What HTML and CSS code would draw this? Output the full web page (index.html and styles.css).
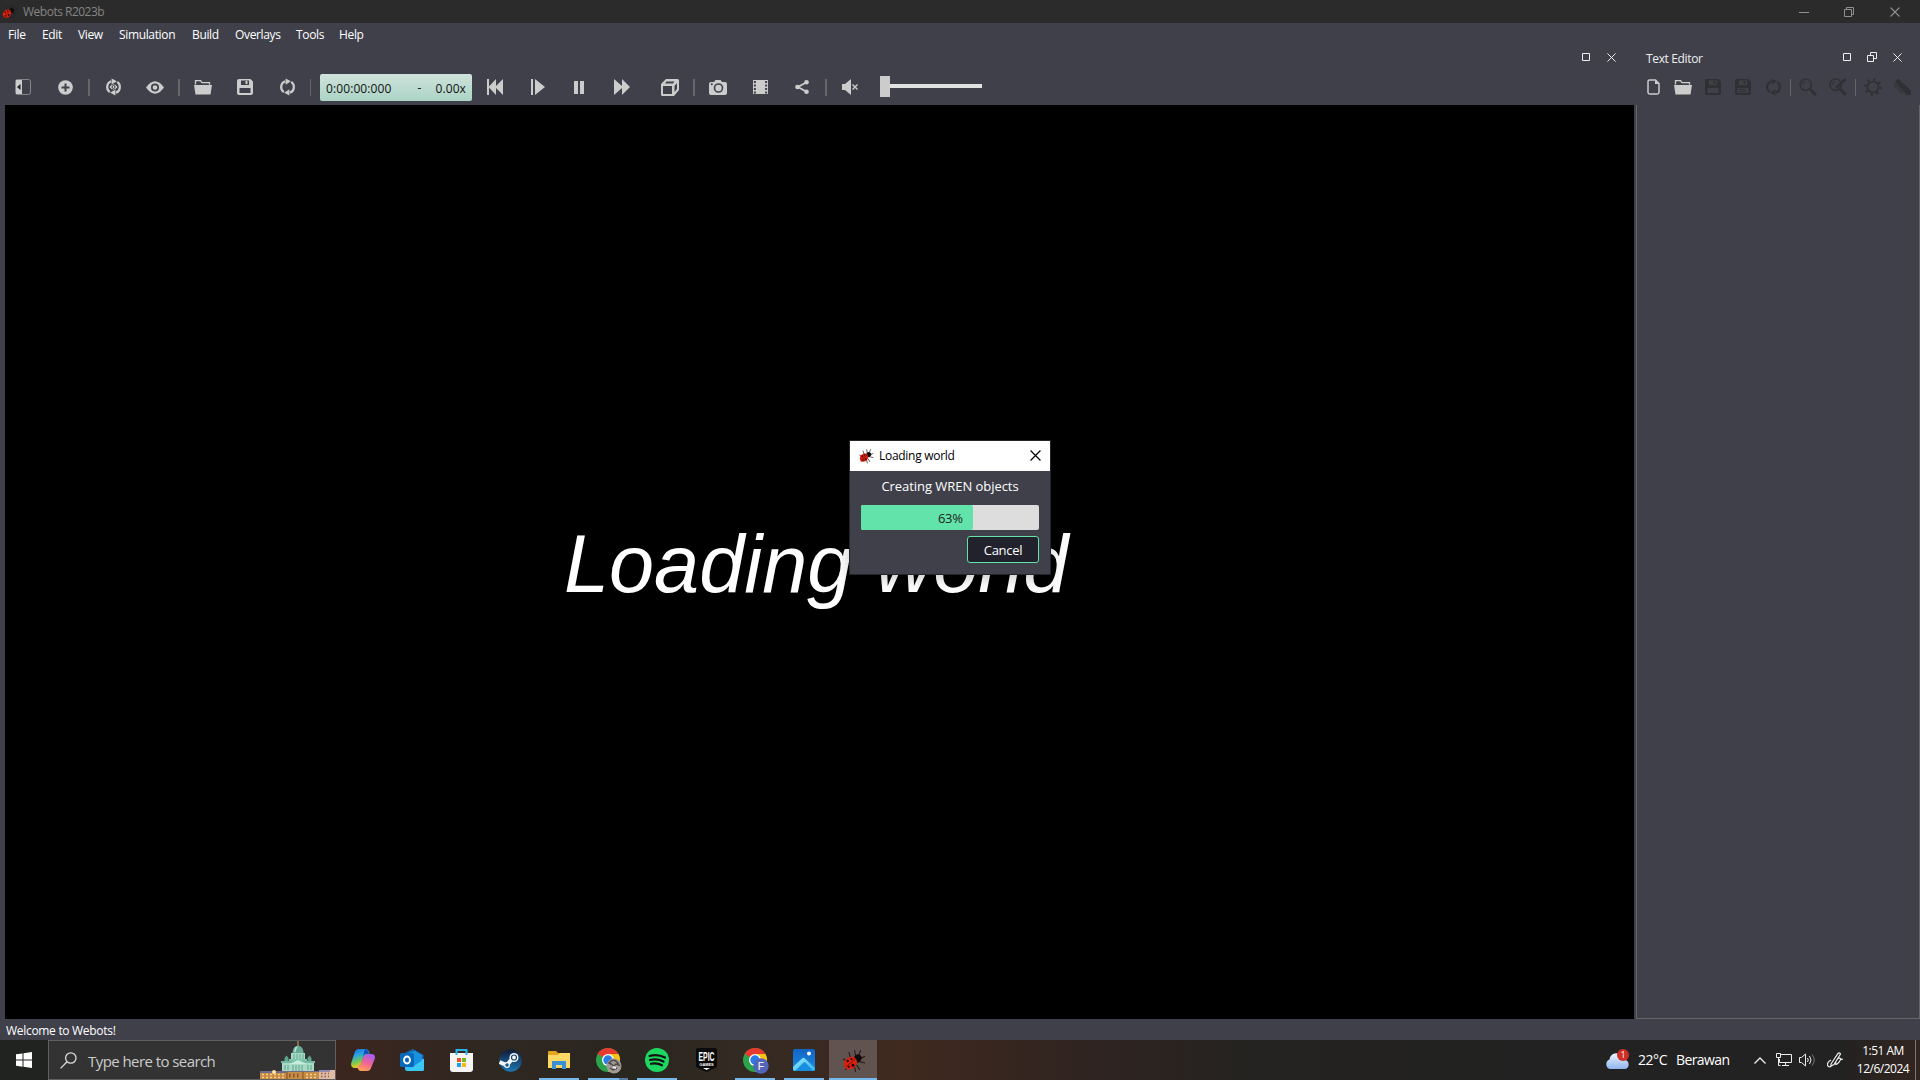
FILE: index.html
```html
<!DOCTYPE html>
<html lang="en">
<head>
<meta charset="utf-8">
<title>Webots R2023b</title>
<link rel="stylesheet" href="styles.css">
</head>
<body>
<svg class="defs" aria-hidden="true">
  <defs>
    <symbol id="bug" viewBox="0 0 24 24">
      <path d="M9 9 7.500 4M7 13 2 10.500M8 17 4 21M13 18l1 5M14 8l-1-6M17 7l2-5M19 10l4-2M17 13l6 1.500M15 16l3 5" fill="none" stroke="#241816" stroke-width="1"/>
      <ellipse cx="16" cy="10" rx="3.600" ry="4" transform="rotate(42 16 10)" fill="#100c0c"/>
      <ellipse cx="9" cy="14.500" rx="6.800" ry="5.700" transform="rotate(-38 9 14.500)" fill="#d8210e"/>
      <path d="M5 18 14 10" stroke="#5a0904" stroke-width=".7"/>
      <circle cx="6.500" cy="12.500" r="1.200" fill="#200"/><circle cx="11.500" cy="16.500" r="1.400" fill="#200"/><circle cx="10" cy="10.500" r="1" fill="#200"/><circle cx="7.400" cy="18" r="1" fill="#200"/>
    </symbol>
    <symbol id="reload" viewBox="0 0 18 18">
      <path d="M6.500 2.800A6.600 6.600 0 0 0 5 14.300M11.500 15.200A6.600 6.600 0 0 0 13 3.700" fill="none" stroke="currentColor" stroke-width="2.300"/>
      <path d="M7 0l5.500 3L7 6.500zM11 11.500v6.500l-5.500-3z" fill="currentColor"/>
    </symbol>
    <symbol id="folder" viewBox="0 0 18 16">
      <path d="M1.500 5.500V1.700h5l1.500 2h7.500v2" fill="none" stroke="currentColor" stroke-width="1.300"/>
      <path d="M0 6h18l-1.500 9.500h-15z" fill="currentColor"/>
    </symbol>
    <symbol id="save" viewBox="0 0 16 16">
      <path fill-rule="evenodd" d="M2 0h11.500L16 2.500V14a2 2 0 0 1-2 2H2a2 2 0 0 1-2-2V2a2 2 0 0 1 2-2zM4 1.500v4.500h8V1.500zM2.500 9v5h11V9z" fill="currentColor"/><path d="M8.500 2h2v3h-2z" fill="currentColor"/>
    </symbol>
    <symbol id="close" viewBox="0 0 10 10"><path d="M.5.5l9 9M9.500.5l-9 9" fill="none" stroke="currentColor" stroke-width="1.100"/></symbol>
    <symbol id="square" viewBox="0 0 8 8"><path d="M.5.5h7v7h-7z" fill="none" stroke="currentColor"/></symbol>
    <symbol id="restore" viewBox="0 0 10 10"><path d="M.5 2.500h7v7h-7zM2.500 2.500v-2h7v7h-2" fill="none" stroke="currentColor"/></symbol>
    <symbol id="float" viewBox="0 0 10 10"><path d="M.5 3.500h6v6h-6zM3.500 3.500v-3h6v6h-3" fill="none" stroke="currentColor"/></symbol>
    <symbol id="magnify" viewBox="0 0 18 18"><circle cx="6.700" cy="6.700" r="5.700" fill="none" stroke="currentColor" stroke-width="1.500"/><path d="M3.500 7a3.300 3.300 0 0 1 3.200-3.500" fill="none" stroke="currentColor"/><path d="M11 11l6 6" stroke="currentColor" stroke-width="3"/></symbol>
    <symbol id="chrome" viewBox="0 0 24 24">
      <circle cx="12" cy="12" r="12" fill="#2aa34b"/>
      <path d="M12 12 1.600 6A12 12 0 0 1 22.400 6z" fill="#e8392e"/>
      <path d="M12 6h10.400A12 12 0 0 1 12 24l5.200-9z" fill="#fbc116"/>
      <circle cx="12" cy="12" r="6" fill="#fff"/><circle cx="12" cy="12" r="4.700" fill="#2b7de9"/>
    </symbol>
    <linearGradient id="gCopA" x1="0" y1="0" x2=".3" y2="1"><stop offset="0" stop-color="#1668e0"/><stop offset=".4" stop-color="#2ba9de"/><stop offset=".7" stop-color="#76c653"/><stop offset="1" stop-color="#f5cd16"/></linearGradient>
    <linearGradient id="gCopB" x1=".7" y1="0" x2=".3" y2="1"><stop offset="0" stop-color="#a75df0"/><stop offset=".5" stop-color="#ee6299"/><stop offset="1" stop-color="#ffa254"/></linearGradient>
    <linearGradient id="gSteam" x1="0" y1="0" x2="0" y2="1"><stop offset="0" stop-color="#101b36"/><stop offset="1" stop-color="#1c78b5"/></linearGradient>
    <linearGradient id="gPhoto" x1="0" y1="0" x2="0" y2="1"><stop offset="0" stop-color="#1164c4"/><stop offset="1" stop-color="#1f8ce4"/></linearGradient>
    <linearGradient id="gHill" x1="0" y1="0" x2="1" y2="1"><stop offset="0" stop-color="#9aecff"/><stop offset="1" stop-color="#2ab2ef"/></linearGradient>
    <linearGradient id="gCloud" x1="0" y1="0" x2="0" y2="1"><stop offset="0" stop-color="#eef5ff"/><stop offset="1" stop-color="#8fb5ee"/></linearGradient>
  </defs>
</svg>

<div class="screen">
  <header class="titlebar">
    <svg class="app-icon"><use href="#bug"/></svg>
    <span class="app-title">Webots R2023b</span>
    <div class="window-buttons">
      <span class="win-btn"><svg width="10" height="10"><path d="M0 5.500h10" stroke="currentColor"/></svg></span>
      <span class="win-btn"><svg width="10" height="10"><use href="#restore"/></svg></span>
      <span class="win-btn"><svg width="10" height="10"><use href="#close"/></svg></span>
    </div>
  </header>

  <nav class="menubar">
    <span class="menu-file">File</span><span class="menu-edit">Edit</span><span class="menu-view">View</span><span class="menu-simulation">Simulation</span><span class="menu-build">Build</span><span class="menu-overlays">Overlays</span><span class="menu-tools">Tools</span><span class="menu-help">Help</span>
  </nav>

  <div class="workspace">
    <main class="view-dock">
      <div class="dock-title">
        <svg width="8" height="8"><use href="#square"/></svg>
        <svg width="9" height="9"><use href="#close"/></svg>
      </div>
      <div class="toolbar">
        <span class="tool"><svg width="16" height="16"><rect x=".5" y=".5" width="15" height="15" rx="2" fill="none" stroke="#85858a"/><path d="M1 1h6v14H1z" fill="#ccc"/><path d="M5.500 5v6L2 8z" fill="#222"/></svg></span>
        <span class="tool"><svg width="15" height="15"><circle cx="7.500" cy="7.500" r="7.300" fill="currentColor"/><path d="M7.500 3.500v8M3.500 7.500h8" stroke="#40404a" stroke-width="2"/></svg></span>
        <i class="sep"></i>
        <span class="tool"><svg width="17" height="18"><use href="#reload"/><path d="M4 9q4.500-6 9 0q-4.500 6-9 0z" fill="currentColor" stroke="#40404a" stroke-width=".8"/><circle cx="8.500" cy="9" r="1.500" fill="none" stroke="#40404a"/></svg></span>
        <span class="tool"><svg width="18" height="13" viewBox="0 0 18 13"><path d="M0 6.500Q9-6 18 6.500Q9 19 0 6.500z" fill="currentColor"/><circle cx="9" cy="6.500" r="3.200" fill="none" stroke="#40404a" stroke-width="1.700"/></svg></span>
        <i class="sep"></i>
        <span class="tool"><svg width="18" height="16"><use href="#folder"/></svg></span>
        <span class="tool"><svg width="16" height="16"><use href="#save"/></svg></span>
        <span class="tool"><svg width="17" height="18"><use href="#reload"/></svg></span>
        <i class="sep thin"></i>
        <div class="clock"><span class="clock-time">0:00:00:000</span><span class="clock-dash">-</span><span class="clock-speed">0.00x</span></div>
        <span class="tool"><svg width="16" height="16" fill="currentColor"><path d="M0 0h2v16H0zM9 0v16L1.500 8zM16 0v16L8 8z"/></svg></span>
        <span class="tool nudge"><svg width="14" height="16" fill="currentColor"><path d="M0 0h2v16H0zM4 0l10 8-10 8z"/></svg></span>
        <span class="tool"><svg width="10" height="13" fill="currentColor"><path d="M0 0h4v13H0zM6 0h4v13H6z"/></svg></span>
        <span class="tool nudge"><svg width="16" height="16" fill="currentColor"><path d="M0 0l8 7V0l8 8-8 8V9l-8 7z"/></svg></span>
        <span class="tool cube"><svg width="18" height="17" fill="currentColor" fill-rule="evenodd"><path d="M5 0h11.500a1.500 1.500 0 0 1 1.500 1.500V11l-5 6H1.500A1.500 1.500 0 0 1 0 15.500V5zM2 7v8h9V7zM5.500 2.500 4 4.500h8l1.500-2zM16 4l-2.500 3v6L16 10z"/></svg></span>
        <i class="sep"></i>
        <span class="tool"><svg width="18" height="15"><path d="M2 2h3l1.500-2h5L13 2h3a2 2 0 0 1 2 2v9a2 2 0 0 1-2 2H2a2 2 0 0 1-2-2V4a2 2 0 0 1 2-2z" fill="currentColor"/><circle cx="9.500" cy="8" r="4" fill="none" stroke="#40404a" stroke-width="1.600"/><circle cx="2.800" cy="4.200" r="1" fill="#40404a"/></svg></span>
        <span class="tool"><svg width="15" height="14"><path d="M0 0h15v14H0z" fill="currentColor"/><path d="M1.900 1v13M13.100 1v13" stroke="#40404a" stroke-width="2" stroke-dasharray="2 1.500"/></svg></span>
        <span class="tool"><svg width="14" height="14" fill="currentColor"><path d="M11.500 2.300 3 7l8.500 4.700" fill="none" stroke="currentColor" stroke-width="1.800"/><circle cx="2.500" cy="7" r="2.300"/><circle cx="11.500" cy="2.300" r="2.300"/><circle cx="11.500" cy="11.700" r="2.300"/></svg></span>
        <i class="sep"></i>
        <span class="tool"><svg width="16" height="16" fill="currentColor"><path d="M0 5h3l6-5v16l-6-5H0z"/><path d="M10.500 5.500l5 5M15.500 5.500l-5 5" stroke="currentColor" stroke-width="1.400"/></svg></span>
        <div class="slider"><b></b></div>
      </div>
      <section class="viewport"><h1 class="splash">Loading world</h1></section>
    </main>

    <aside class="editor-dock">
      <div class="dock-title">
        <span class="dock-name">Text Editor</span>
        <svg width="8" height="8"><use href="#square"/></svg>
        <svg width="10" height="10"><use href="#float"/></svg>
        <svg width="9" height="9"><use href="#close"/></svg>
      </div>
      <div class="toolbar">
        <span class="tool"><svg width="13" height="16"><path d="M2.500 1h6L12 4.500v9a1.700 1.700 0 0 1-1.700 1.500H2.500A1.600 1.600 0 0 1 1 13.500v-11A1.500 1.500 0 0 1 2.500 1z" fill="none" stroke="currentColor" stroke-width="1.500"/><path d="M8 1v4h4z" fill="currentColor"/></svg></span>
        <span class="tool"><svg width="18" height="16"><use href="#folder"/></svg></span>
        <span class="tool off"><svg width="16" height="16"><use href="#save"/></svg></span>
        <span class="tool off"><svg width="16" height="16"><use href="#save"/><path d="M4 10.500h7M4 12.500h8" stroke="currentColor"/></svg></span>
        <span class="tool off"><svg width="17" height="18"><use href="#reload"/></svg></span>
        <i class="sep thin"></i>
        <span class="tool off"><svg width="18" height="18"><use href="#magnify"/></svg></span>
        <span class="tool off"><svg width="18" height="18"><use href="#magnify"/><path d="M7 10l9.500-9" stroke="currentColor" stroke-width="2.500"/></svg></span>
        <i class="sep thin"></i>
        <span class="tool off"><svg width="18" height="18" fill="none" stroke="currentColor"><circle cx="9" cy="9" r="5.500" stroke-width="1.700"/><circle cx="9" cy="9" r="7.700" stroke-width="2.400" stroke-dasharray="2.200 3.850"/></svg></span>
        <span class="tool off"><svg width="18" height="18"><path d="M1 3.500 4 .5 17 12.500v4.500h-3.500z" fill="currentColor"/><path d="M1 5.500l13 12M0 7.500l9 8" fill="none" stroke="currentColor" stroke-dasharray="1 1" stroke-width="2"/></svg></span>
      </div>
      <div class="editor-pane"></div>
    </aside>
  </div>

  <footer class="statusbar">Welcome to Webots!</footer>

  <div class="taskbar">
    <div class="start"><svg width="16" height="16" fill="#fff"><path d="M0 2.300 6.500 1.400v6.200H0zM7.500 1.200 16 0v7.600H7.500zM0 8.500h6.500v6.200L0 13.800zM7.500 8.500H16V16l-8.500-1.200z"/></svg></div>
    <div class="search">
      <svg width="17" height="17" fill="none" stroke="#ddd" stroke-width="1.300"><circle cx="10.800" cy="6" r="5.200"/><path d="M7 9.800.6 16.400"/></svg>
      <span class="search-text">Type here to search</span>
      <svg class="landmark" width="75" height="38" viewBox="0 0 75 38">
        <path d="M32.500 12q0-5 3-6.500l2.500-1 2.500 1q3 1.500 3 6.500z" fill="#69ab96"/><path d="M35 11q0-4 2-5" fill="none" stroke="#b5e4d4" stroke-width="1.500"/><path d="M37.500 0h1v5h-1z" fill="#d4a94c"/>
        <path d="M31 12h14v7H31z" fill="#a4ddc6"/><path d="M24.500 20v-3l2-2.500 2 2.500v3zM47.500 20v-3l2-2.500 2 2.500v3z" fill="#5ea38e"/>
        <path d="M29 18h18v3H29z" fill="#7fc4ac"/><path d="M22 20h32v11H22z" fill="#a7dbc6"/><path d="M21 20h34v2H21z" fill="#78b7a2"/><path d="M29 23l9-4 9 4z" fill="#c5ecdd"/>
        <path d="M25 24v5M28 24v5M33 24v6M36 24v6M39 24v6M42 24v6M48 24v5M51 24v5" stroke="#5b9786" stroke-width=".9"/><path d="M34 13v5M37 13v5M40 13v5M43 13v5" stroke="#5b9786" stroke-width=".8"/>
        <path d="M0 31h75v7H0z" fill="#c78d46"/><path d="M0 30h26v2H0zM26 30h33v1H26z" fill="#716a87"/><path d="M59 29h16v9H59z" fill="#dfb9a0"/><path d="M59 29h11v2H59z" fill="#8f8bb0"/>
        <path d="M2 33.500h24M2 36.500h24M46 33.500h11M46 36.500h11" stroke="#f2ce84" stroke-width="1.500" stroke-dasharray="2 2"/><path d="M29 34.500h12" stroke="#8b5728" stroke-width="4" stroke-dasharray="1.500 2.500"/><path d="M61 32.500h8M61 35.500h8" stroke="#906050" stroke-width="1.300" stroke-dasharray="1.500 2"/><path d="M27 31v7M43 31v7" stroke="#7d4d22"/><circle cx="14" cy="31" r="2" fill="#ffe5a0"/>
      </svg>
    </div>
    <div class="tasks">
      <span class="task"><svg width="24" height="22" viewBox="0 0 24 22"><path d="M7 0h8q2 0 2.700 2L19 6h-4q-2 0-3 3l-2.500 8q-.8 2-3 2H3Q-1 18 .5 13L4 2.500Q5 0 7 0z" fill="url(#gCopA)"/><path d="M18 5h3q4 .5 2.700 5L20 19q-1 3-3.500 3H10q-2.500 0-3.300-3L6 17h1q2 0 3-3l2.500-6q1-3 5.500-3z" fill="url(#gCopB)"/><path d="M14 0q3 0 4 5h-3.500q-2 0-3 3z" fill="#174fbf"/></svg></span>
      <span class="task"><svg width="24" height="22" viewBox="0 0 24 22"><path d="M3 5 13 0l10.500 6v5L13 15 3 11z" fill="#126bb9"/><path d="M5 10h19v10a2 2 0 0 1-2 2H7a2 2 0 0 1-2-2z" fill="#36bff2"/><path d="M8 4l7-2 7 4v7l-9 5-5-4z" fill="#1a91df"/><path d="M24 10v10q0 2-2 2H7z" fill="#3ac9f5"/><rect y="4" width="14" height="14" rx="1.500" fill="#0868ba"/><ellipse cx="7" cy="11" rx="3" ry="3.500" fill="none" stroke="#fff" stroke-width="1.900"/></svg></span>
      <span class="task"><svg width="23" height="23" viewBox="0 0 23 23"><path d="M6.500 6V1h10v5" fill="none" stroke="#28b3ed" stroke-width="2"/><path d="M0 4h23v16q0 3-3 3H3q-3 0-3-3z" fill="#f4f4f4"/><path d="M6.500 3.500V6M16.500 3.500V6" stroke="#28b3ed" stroke-width="2"/><path fill="#ef5126" d="M7 9h4v4H7z"/><path fill="#77b727" d="M12 9h4v4h-4z"/><path fill="#1ba1e5" d="M7 14h4v4H7z"/><path fill="#fdb714" d="M12 14h4v4h-4z"/></svg></span>
      <span class="task"><svg width="23" height="23" viewBox="0 0 23 23"><circle cx="11.500" cy="11.500" r="11.200" fill="url(#gSteam)"/><path d="M.5 13l7 3M8 16l5-6" stroke="#f4f7fa" stroke-width="4"/><circle cx="8" cy="16" r="3" fill="#f4f7fa"/><circle cx="8" cy="16" r="1.800" fill="#215a89"/><circle cx="15" cy="8.500" r="4.500" fill="#f4f7fa"/><circle cx="15" cy="8.500" r="2.500" fill="none" stroke="#194371" stroke-width="1.200"/></svg></span>
      <span class="task running"><svg width="22" height="19" viewBox="0 0 22 19"><path d="M0 1q0-1 1-1h7l2 2h11q1 0 1 1v14H0z" fill="#e5a51e"/><path d="M0 4h10l2-2h10v15H0z" fill="#ffd865"/><path d="M4 18V10h14v8h-4v-4H8v4z" fill="#3990d5"/></svg></span>
      <span class="task running grouped"><svg class="profile" width="26" height="26" viewBox="0 0 26 26"><use href="#chrome" width="24" height="24"/><circle cx="18" cy="18" r="7.500" fill="#a09b96"/><path d="M13 15q4-5 8-1l2 3-3-1-2 2-3-2zM14 20l3 2 4-2" fill="none" stroke="#4f4a47" stroke-width="1.500"/><path d="M17 19l3 1" stroke="#eee" stroke-width="2"/></svg></span>
      <span class="task running"><svg width="24" height="24" viewBox="0 0 24 24"><circle cx="12" cy="12" r="12" fill="#1ed760"/><path d="M4.500 8q8-2.500 15.500 1.500M5 12q7-2 13.500 1.500M6 15.800q6-1.500 11 1.500" fill="none" stroke="#111" stroke-width="2.200" stroke-linecap="round"/></svg></span>
      <span class="task"><svg class="epic" width="21" height="24" viewBox="0 0 21 24"><path d="M2 0h17q2 0 2 2v17l-10.500 5L0 19V2q0-2 2-2z" fill="#0b0b0b"/><text x="2.500" y="13" textLength="16" lengthAdjust="spacingAndGlyphs" font-size="12.500" font-weight="700">EPIC</text><text x="3.500" y="17.700" textLength="14" lengthAdjust="spacingAndGlyphs" font-size="4.300" font-weight="700">GAMES</text><path d="M7 20h7l-3.500 2z" fill="#fff"/></svg></span>
      <span class="task running"><svg class="profile" width="26" height="26" viewBox="0 0 26 26"><use href="#chrome" width="24" height="24"/><circle cx="18" cy="18" r="7.700" fill="#5365ba"/><text x="18" y="22" text-anchor="middle" font-size="10.500" fill="#fff">F</text></svg></span>
      <span class="task running"><svg width="22" height="22" viewBox="0 0 22 22"><rect width="22" height="22" rx="2" fill="url(#gPhoto)"/><path d="M0 18 9 9.500q1.500-1.500 3 0L22 19v1q0 2-2 2H2q-2 0-2-2z" fill="url(#gHill)"/><path d="M2 22 10 14q1.500-1.500 3 0l7 8z" fill="#198de1"/><circle cx="16" cy="4.500" r="2" fill="#fff"/></svg></span>
      <span class="task active"><svg width="25" height="25"><use href="#bug"/></svg></span>
    </div>
    <div class="tray">
      <svg class="weather" width="25" height="21" viewBox="0 0 25 21"><path d="M5 20a5 5 0 0 1-.5-9.500A7 7 0 0 1 17 7a5 5 0 0 1 3 4 4.600 4.600 0 0 1 0 9z" fill="url(#gCloud)"/><circle cx="18" cy="6" r="6" fill="#cf2e25"/><text x="18" y="9.200" text-anchor="middle" font-size="9" fill="#fff">1</text></svg>
      <span class="temp">22°C</span><span class="condition">Berawan</span>
      <svg class="chevron" width="12" height="7" fill="none" stroke="#eee" stroke-width="1.300"><path d="M.5 6.500l5.500-5.500 5.500 5.500"/></svg>
      <svg class="network" width="16" height="14" fill="none" stroke="#eee"><path d="M5 1.500h10.500v8H3.500V6M9.500 9.500v3M6 12.500h7M.5.500h4v4h-4zM2.500 4.500v8h2"/></svg>
      <svg class="volume" width="17" height="14" fill="none" stroke="#eee"><path d="M.5 4.500h2l4-3.500v12l-4-3.500h-2zM8.500 5q1.500 2 0 4M10.500 3q3 4 0 8"/><path d="M13 1.500q4.500 5.500 0 11" stroke="#777"/></svg>
      <svg class="pen" width="17" height="16" fill="none" stroke="#eee" stroke-width="1.200"><path d="M4 12 11 1.500q1.500-1.500 2.500.5L7 12.500 4 14zM4 8q-4 2-3.500 5 1 3 4 1M9 13q-1-3 1-5.500t4-.5q-2 4-4.500 5.500M13 8l3-1"/></svg>
      <div class="datetime"><span class="time">1:51 AM</span><span class="date">12/6/2024</span></div>
    </div>
  </div>

  <div class="dialog">
    <div class="dialog-title"><svg width="16" height="16"><use href="#bug"/></svg><span>Loading world</span><svg width="11" height="11"><use href="#close"/></svg></div>
    <div class="dialog-body">
      <div class="message">Creating WREN objects</div>
      <div class="progress"><div class="fill" style="width:63%"></div><span>63%</span></div>
      <button class="cancel">Cancel</button>
    </div>
  </div>
</div>
</body>
</html>
```
FILE: styles.css
```css
* { box-sizing: border-box; }
body { margin: 0; font: 12px/16px "Open Sans", "Noto Sans", sans-serif; letter-spacing: -.35px; color: #fff; background: #40404a; }
svg { display: block; flex: none; }
.defs { position: absolute; width: 0; height: 0; }
.screen { position: relative; width: 1920px; height: 1080px; overflow: hidden; display: flex; flex-direction: column; white-space: nowrap; }

.titlebar { height: 23px; flex: none; display: flex; align-items: center; background: #2b2b2b; color: #858585; }
.app-icon { width: 16px; height: 16px; margin: 0 5px 0 1px; }
.app-title { padding: 1px 0 0 1px; letter-spacing: -.5px; }
.window-buttons { margin-left: auto; margin-right: 2px; display: flex; height: 20px; color: #909090; }
.win-btn { width: 46px; display: flex; align-items: center; justify-content: center; }
.win-btn:first-child { width: 45px; }

.menubar { height: 23px; flex: none; display: flex; align-items: center; padding-left: 8px; padding-top: 1px; }
.menu-file { width: 34px; }
.menu-edit { width: 36px; }
.menu-view { width: 41px; }
.menu-simulation { width: 73px; }
.menu-build { width: 43px; }
.menu-overlays { width: 61px; }
.menu-tools { width: 43px; }

.workspace { flex: 1; display: flex; min-height: 0; }
.view-dock { width: 1634px; display: flex; flex-direction: column; }
.editor-dock { flex: 1; padding-left: 2px; display: flex; flex-direction: column; }
.dock-title { height: 23px; flex: none; display: flex; align-items: center; justify-content: flex-end; gap: 17px; color: #eee; }
.dock-title svg { margin-top: -1px; }
.view-dock .dock-title { padding-right: 18px; }
.editor-dock .dock-title { gap: 16px; padding: 0 18px 0 10px; }
.dock-name { margin-right: auto; padding-top: 3px; }
.toolbar { height: 36px; flex: none; display: flex; align-items: center; color: #ccc; }
.view-dock .toolbar { padding-left: 2px; }
.tool { width: 42px; display: flex; justify-content: center; flex: none; }
.nudge { padding-left: 2px; }
.sep { width: 2px; height: 17px; margin: 0 2px; background: #666; flex: none; }
.thin { width: 1px; }
.clock { width: 152px; height: 27px; margin: 0 2px 0 7px; padding: 7px 6px 0 6px; border-radius: 2px; display: flex; color: #111; background: linear-gradient(#cfe2dc, #abd4c5); letter-spacing: .1px; }
.clock-dash { margin: -1px 0 0 26px; }
.clock-speed { margin-left: auto; }
.cube { margin-left: 7px; }
.slider { width: 102px; height: 4px; margin: -2px 0 0 9px; background: #e2e2e4; display: flex; align-items: center; }
.slider b { width: 10px; height: 21px; background: #ccc; }
.viewport { flex: 1; margin-left: 5px; background: #000; }
.splash { margin: 409px 0 0 559px; font: italic 81px/100px "Liberation Sans", Arial, sans-serif; letter-spacing: 0; }
.editor-dock .toolbar { padding-left: 2px; }
.editor-dock .tool { width: 30px; }
.editor-dock .sep { margin: 0 2px; }
.off { color: #303034; }
.editor-pane { flex: 1; border: 1px solid #666; border-top: 0; }

.statusbar { height: 21px; flex: none; padding: 4px 6px; letter-spacing: -.3px; }

.taskbar { height: 40px; flex: none; display: flex; background: linear-gradient(90deg, #20231f 0, #20231f 48px, #3b261f 350px, #302721 480px, #29271f 640px, #332a23 740px, #40291f 900px, #302420 1080px, #242321 1260px, #222 1560px, #222 1840px, #33251f 1920px); }
.start { width: 48px; display: flex; align-items: center; justify-content: center; }
.search { width: 288px; border: 1px solid #606060; background: #333; display: flex; align-items: center; padding-left: 11px; }
.search-text { margin: 1px 0 0 11px; font-size: 15px; color: #ccc; letter-spacing: -.57px; }
.landmark { margin-left: auto; align-self: flex-end; }
.tasks { display: flex; padding-left: 2.500px; }
.task { width: 49px; display: flex; align-items: center; justify-content: center; background: linear-gradient(#76b9ed, #76b9ed) center bottom / 0 2px no-repeat; }
.running { background-size: 40px 2px; }
.grouped { background-image: linear-gradient(90deg, #76b9ed 31px, #567d9f 31px); }
.profile { margin: 2px 0 0 2px; }
.active { width: 48px; margin-left: .5px; background-color: #605350; background-size: 48px 2px; }
.epic { fill: #fff; overflow: visible; }
.task text { font-family: "Liberation Sans", sans-serif; letter-spacing: 0; }
.tray { margin-left: auto; display: flex; align-items: center; font-size: 14px; border-right: 1px solid #777; margin-right: 4px; }
.weather { margin-top: -2px; }
.weather text { letter-spacing: 0; }
.temp { width: 38px; margin-left: 8px; letter-spacing: -.45px; }
.condition { width: 78px; letter-spacing: -.6px; }
.chevron { margin-right: 10px; }
.network { margin-right: 7px; }
.volume { margin-right: 11px; }
.pen { margin-right: 11px; }
.datetime { width: 56px; display: flex; flex-direction: column; align-items: center; font-size: 12px; line-height: 18px; letter-spacing: -.5px; margin-right: 4px; }

.dialog { position: absolute; left: 849px; top: 440px; width: 202px; height: 135px; border: 1px solid #252529; background: #40404a; box-shadow: 0 3px 14px rgba(0, 0, 0, .22); }
.dialog-title { height: 30px; padding: 0 9px 0 8px; display: flex; align-items: center; background: #fff; color: #000; }
.dialog-title span { margin: 0 auto 0 5px; letter-spacing: -.28px; }
.dialog-title svg { margin-top: -1px; }
.dialog-body { padding: 0 11px; display: flex; flex-direction: column; }
.message { height: 34px; padding-top: 7px; font-size: 13px; text-align: center; letter-spacing: -.05px; }
.progress { height: 25px; border-radius: 2px; background: #ddd; display: grid; align-items: center; color: #222; font-size: 13px; }
.fill, .progress span { grid-area: 1 / 1; }
.fill { height: 25px; background: #62e3aa; border-radius: 2px; }
.progress span { padding: 1px 0 0 77px; }
.cancel { width: 72px; height: 27px; margin: 6px 0 0; padding: 1px 0 0; align-self: flex-end; border: 1px solid #62e3aa; border-radius: 3px; background: #22222c; color: #fff; font: inherit; font-size: 13px; line-height: 16px; letter-spacing: -.3px; }
```
